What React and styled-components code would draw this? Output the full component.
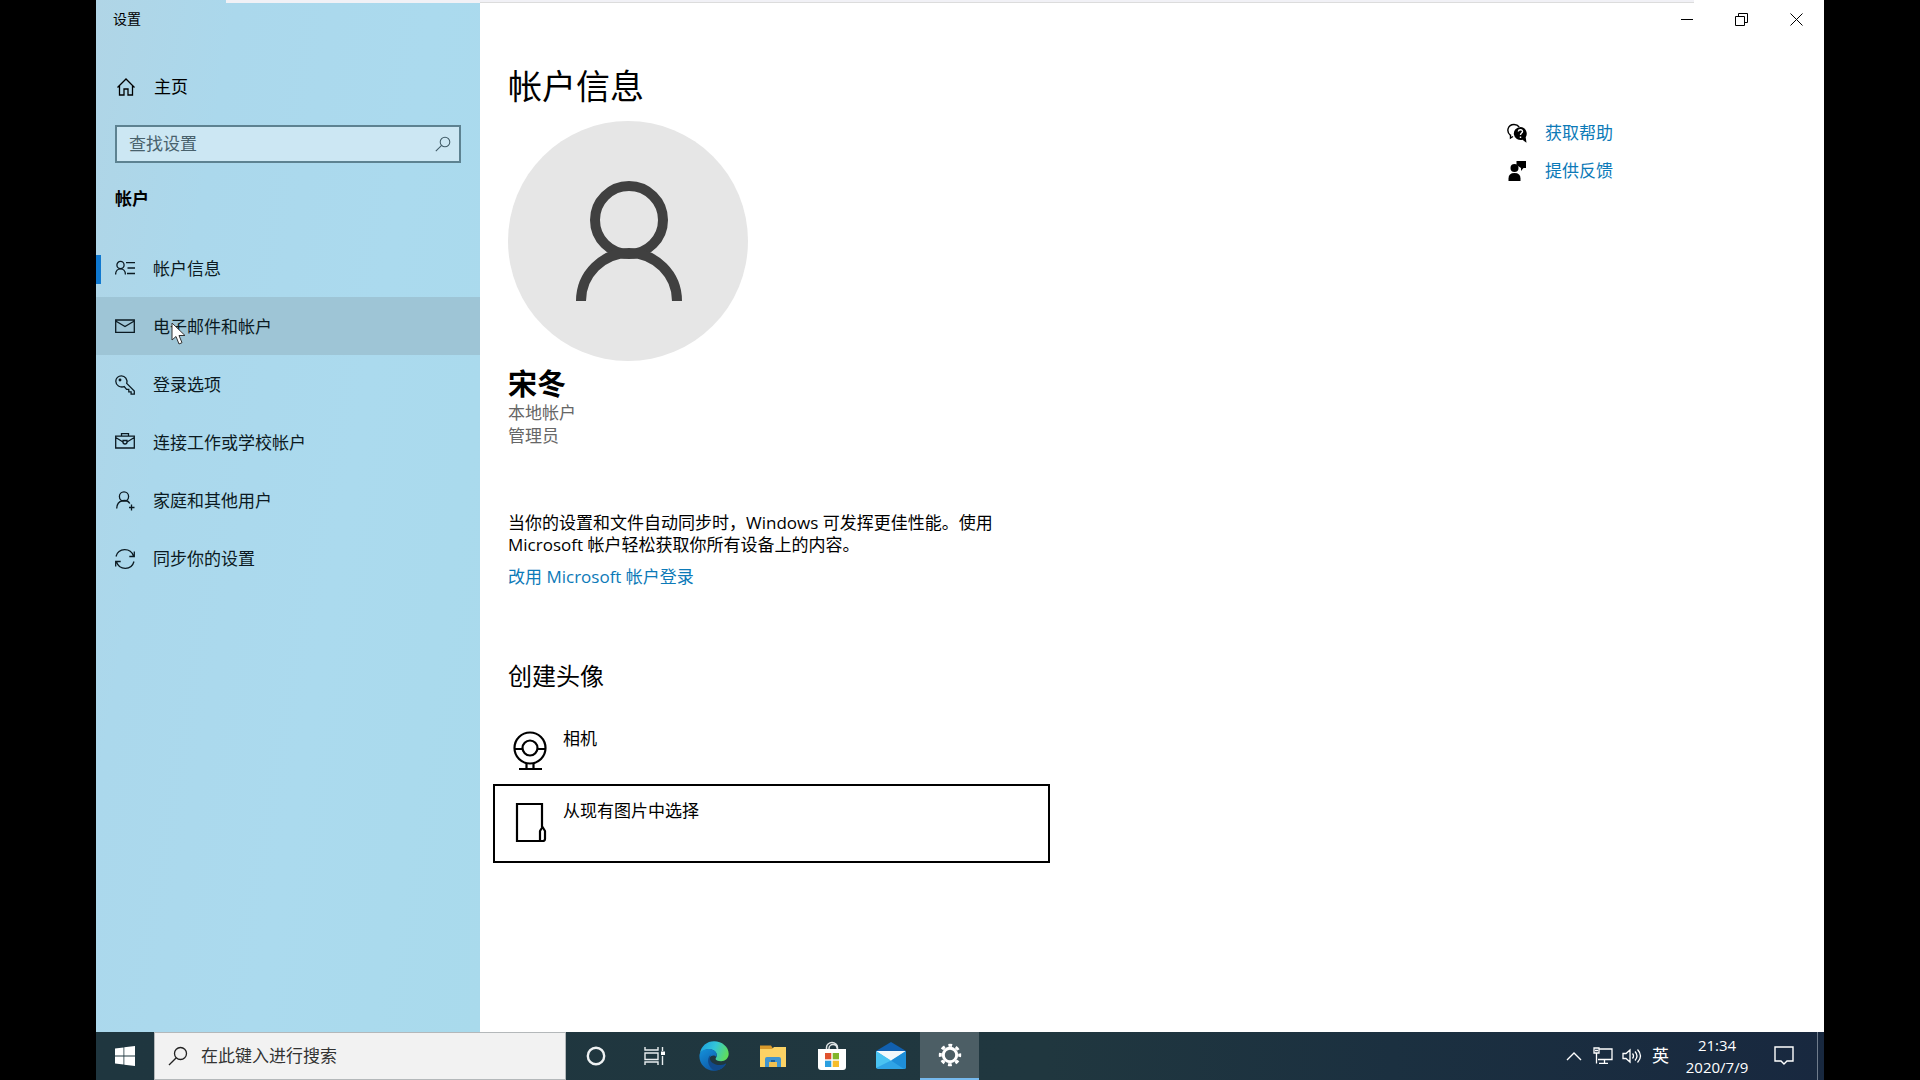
import React from "react";
import styled, { createGlobalStyle } from "styled-components";

const GlobalStyle = createGlobalStyle`
  * {
    box-sizing: border-box;
  }
  body {
    margin: 0;
    background: #000;
    color: #000;
    font-family: "Open Sans", "Noto Sans CJK SC", sans-serif;
    font-size: 17px;
    line-height: 22px;
  }
  button, input {
    font: inherit;
    color: inherit;
  }
  h1, h2, h3, p {
    margin: 0;
    font-weight: 400;
  }
  svg {
    display: block;
    flex: none;
  }
`;

const Desktop = styled.div`
  display: flex;
  flex-direction: column;
  min-height: 100vh;
  padding: 0 5%;
`;

const Window = styled.div`
  flex: 1;
  display: flex;
  background: #fff;
`;

const Sidebar = styled.aside`
  width: 384px;
  flex: none;
  background: linear-gradient(100deg, #b0d5e6 0%, #abd8ec 25%, #abdaee 60%, #a9daec 100%);
`;

const BackTab = styled.div`
  height: 3px;
  margin-left: ${(props) => props.$left || "0"};
  margin-right: ${(props) => props.$right || "0"};
  background: #f1f1f6;
  border-bottom: ${(props) => (props.$line ? "1px solid #dcdcdc" : "0")};
`;

const AppTitle = styled.div`
  padding: 5px 17px 6px;
  font-size: 14px;
`;

const HomeLink = styled.a`
  display: flex;
  align-items: center;
  gap: 18px;
  margin-top: 29px;
  height: 44px;
  padding-left: 20px;
  color: #000;
  text-decoration: none;
`;

const SearchBox = styled.label`
  display: flex;
  align-items: center;
  margin: 16px 19px 0;
  height: 38px;
  padding: 0 8px 0 12px;
  border: 2px solid #5d8291;
  background: #cce7f3;
  color: #3f5a66;

  input {
    flex: 1;
    min-width: 0;
    padding: 0;
    border: 0;
    outline: 0;
    background: transparent;
  }
  input::placeholder {
    color: #48616c;
    opacity: 1;
  }
`;

const Category = styled.h2`
  padding: 25px 19px 0;
  font-size: 17px;
  line-height: 22px;
  font-weight: 700;
`;

const Nav = styled.nav`
  margin-top: 29px;
`;

const NavItem = styled.a`
  display: flex;
  align-items: center;
  gap: 18px;
  height: 58px;
  padding-top: 2px;
  color: #0b1a22;
  text-decoration: none;
  background: ${(props) => (props.$hover ? "#9ec5d6" : "transparent")};

  &::before {
    content: "";
    width: 5px;
    height: 29px;
    margin-right: -4px;
    background: ${(props) => (props.$active ? "#0f78d0" : "transparent")};
  }
`;

const Pointer = styled.svg`
  position: absolute;
  left: 171px;
  top: 322px;
`;

const Main = styled.main`
  flex: 1;
  min-width: 0;
`;

const Controls = styled.div`
  display: flex;
  justify-content: flex-end;
  height: 32px;
`;

const ControlButton = styled.button`
  display: flex;
  align-items: center;
  justify-content: center;
  width: 55px;
  padding: 0;
  border: 0;
  background: transparent;
`;

const Content = styled.div`
  display: flex;
  justify-content: space-between;
  padding: 27px 211px 0 28px;
`;

const Title = styled.h1`
  font-size: 34px;
  line-height: 48px;
  font-weight: 400;
`;

const Avatar = styled.div`
  width: 240px;
  height: 240px;
  margin-top: 11px;
  border-radius: 50%;
  background: #e6e6e6;
`;

const UserName = styled.h2`
  margin-top: 6px;
  font-size: 29px;
  line-height: 34px;
  font-weight: 700;
`;

const Muted = styled.p`
  color: #666;
  line-height: 23px;
`;

const Description = styled.p`
  width: 500px;
  margin-top: 65px;
`;

const Link = styled.a`
  color: #0c7ab8;
  text-decoration: none;
`;

const SignIn = styled.p`
  margin-top: 10px;
`;

const SectionTitle = styled.h3`
  margin-top: 72px;
  font-size: 24px;
  line-height: 32px;
`;

const Picker = styled.div`
  margin: 20px 0 0 -15px;
`;

const PickerButton = styled.button`
  display: flex;
  align-items: flex-start;
  gap: 16px;
  width: 557px;
  height: ${(props) => (props.$focused ? "79px" : "72px")};
  padding: ${(props) => (props.$focused ? "14px 18px" : "16px 20px")};
  border: ${(props) => (props.$focused ? "2px solid #000" : "0")};
  background: transparent;
  text-align: left;

  svg {
    margin-top: 3px;
  }
`;

const Help = styled.div`
  display: flex;
  flex-direction: column;
  gap: 16px;
  padding-top: 60px;
`;

const HelpRow = styled(Link)`
  display: flex;
  align-items: center;
  gap: 17px;
`;

const Taskbar = styled.footer`
  display: flex;
  height: 48px;
  background: linear-gradient(90deg, #1f363f 0%, #20373f 55%, #1b3040 75%, #18283f 100%);
  color: #fff;
`;

const TaskButton = styled.button`
  display: flex;
  align-items: center;
  justify-content: center;
  width: ${(props) => props.$width || "59px"};
  padding: 0;
  border: 0;
  border-bottom: ${(props) => (props.$active ? "2px solid #76b9ed" : "0")};
  background: ${(props) => (props.$active ? "#4c5e65" : "transparent")};
`;

const TaskSearch = styled.label`
  display: flex;
  align-items: center;
  gap: 13px;
  width: 412px;
  padding-left: 13px;
  border: 1px solid #b4b8ba;
  background: #f2f2f2;
  color: #222;

  input {
    flex: 1;
    min-width: 0;
    padding: 0;
    border: 0;
    outline: 0;
    background: transparent;
  }
  input::placeholder {
    color: #333;
    opacity: 1;
  }
`;

const Tray = styled.div`
  display: flex;
  align-items: center;
  margin-left: auto;
`;

const TrayButton = styled.button`
  display: flex;
  align-items: center;
  justify-content: center;
  width: 29px;
  height: 48px;
  padding: 0;
  border: 0;
  background: transparent;
`;

const Clock = styled.time`
  width: 84px;
  text-align: center;
  font-size: 15px;
`;

const ActionButton = styled(TrayButton)`
  width: 50px;
  margin-right: 8px;
`;

const ShowDesktop = styled.button`
  width: 7px;
  height: 48px;
  padding: 0;
  border: 0;
  border-left: 1px solid #6f7c8c;
  background: transparent;
`;

const Line = ({ size = 20, width = 1.3, children }) => (
  <svg width={size} height={size} viewBox="0 0 20 20" fill="none" stroke="currentColor" strokeWidth={width}>
    {children}
  </svg>
);

const HomeIcon = () => (
  <Line>
    <path d="M1.5 10.5 10 2l8.500 8.500M3.500 9v9H8v-6h4v6h4.500V9" />
  </Line>
);

const SearchIcon = ({ size }) => (
  <Line size={size}>
    <circle cx="12.500" cy="7.500" r="6" />
    <path d="M8.300 11.700 1 19" />
  </Line>
);

const InfoIcon = () => (
  <Line>
    <circle cx="5.500" cy="6" r="3.600" />
    <path d="M.6 15.500c0-7.500 9.800-7.500 9.800 0M11 3.700h9M12.500 9h7.500M12 14.500h8" />
  </Line>
);

const MailIcon = () => (
  <Line>
    <path d="M.7 3h18.600v12.300H.7zM.7 4 10 9.500 19.300 4" />
  </Line>
);

const KeyIcon = () => (
  <Line>
    <path d="M9.200 11.600C5 13 .8 10.200.8 6.300.8 3.200 3.300.8 6.400.8c3.700 0 6.400 3.700 5.300 7.600l7.600 7.600v3.200h-3.200v-2.400h-2.300v-2.400h-2.200z" />
    <circle cx="5" cy="5" r=".8" fill="currentColor" />
  </Line>
);

const BriefcaseIcon = () => (
  <Line>
    <path d="M.7 3.200h18.600V15H.7zM6.500 3V.7h7V3M.7 4.500 8 9M12 9l7.300-4.500" />
    <path d="M8 7.500h4V9a2 2 0 0 1-4 0z" />
  </Line>
);

const FamilyIcon = () => (
  <Line>
    <circle cx="9" cy="5.500" r="4.600" />
    <path d="M1.700 17.500C2 8 12.500 8 14.800 12.500M16.500 13.500v6M14 16.500h5.500" />
  </Line>
);

const SyncIcon = () => (
  <Line>
    <path d="M1 7.500C3.500-1.500 15.500-1.500 18.500 7M19.300 2.500v5h-5M19 12.500C16.500 21.500 4.500 21.500 1.500 13M.7 17.500v-5h5" />
  </Line>
);

const WebcamIcon = () => (
  <svg width="34" height="40" viewBox="0 0 34 40" fill="none" stroke="#000" strokeWidth="2.200">
    <circle cx="17" cy="17" r="15.500" />
    <circle cx="17" cy="17" r="7.500" />
    <path d="M1 18h8.500M24.500 18H33M13.500 32v5M20.500 32v5M6 38h23" />
  </svg>
);

const PictureIcon = () => (
  <svg width="34" height="40" viewBox="0 0 34 40" fill="none" stroke="#000" strokeWidth="2.200">
    <path d="M27 38H4V1h25v23M27 38V28l2.500-4 2.500 4v8q0 2-2.500 2H27" />
  </svg>
);

const HelpIcon = () => (
  <svg width="21" height="21" viewBox="0 0 21 21">
    <path d="M3.500 11.500V15L6 13.500M3.500 12.500C-1 9 .5 1.500 7 1.500c2.500 0 4 .8 5.200 2.500" fill="none" stroke="#000" strokeWidth="1.400" />
    <path d="M13.500 4a7 6.500 0 1 0 2 12.800l4 3-.8-5.500A6.700 6.700 0 0 0 13.500 4z" />
    <path d="M11.300 8.500c.3-2.500 4.500-2.200 4.200.2-.2 1.400-2 1.500-2 3.200M13.500 13.500v1.500" fill="none" stroke="#fff" strokeWidth="1.400" />
  </svg>
);

const FeedbackIcon = () => (
  <svg width="21" height="21" viewBox="0 0 21 21">
    <path d="M9.500 0H19v7h-2.500L14 10V7l-4.500-3z" />
    <circle cx="7.500" cy="7" r="4" />
    <path d="M1.500 20v-2.500Q1.500 12 7.500 12t6 5.500V20z" />
  </svg>
);

const WindowsIcon = () => (
  <svg width="20" height="20" viewBox="0 0 20 20" fill="#fff">
    <path d="M0 2.500 8.500 1.400v8.200H0zM9.300 1.300 20 0v9.600H9.300zM0 10.400h8.500v8.200L0 17.500zM9.300 10.400H20V20L9.300 18.700z" />
  </svg>
);

const CortanaIcon = () => (
  <svg width="20" height="20" viewBox="0 0 20 20" fill="none" stroke="#eef2f3" strokeWidth="2.400">
    <circle cx="10" cy="10" r="8.200" />
  </svg>
);

const TaskViewIcon = () => (
  <svg width="22" height="20" viewBox="0 0 22 20" fill="none" stroke="#e8edef" strokeWidth="1.400">
    <path d="M1 1v3h13V1M1 7h13v6.500H1zM1 19v-3h13v3M18.500 1v4M18.500 10v9" />
    <path d="M17 5.500h4v3.500h-4z" fill="#fff" stroke="none" />
  </svg>
);

const EdgeIcon = () => (
  <svg width="30" height="30" viewBox="0 0 30 30">
    <defs>
      <linearGradient id="edgeTop" x1="0" x2="1" y1="0.200" y2="0.500">
        <stop offset="0" stopColor="#1c9fe0" />
        <stop offset="0.500" stopColor="#33c5d8" />
        <stop offset="1" stopColor="#5fdc5c" />
      </linearGradient>
      <linearGradient id="edgeLow" x1="0" x2="0.800" y1="0" y2="1">
        <stop offset="0" stopColor="#1492dc" />
        <stop offset="1" stopColor="#0d4e9c" />
      </linearGradient>
    </defs>
    <path d="M.8 13C2 5 8 .3 15 .3c8 0 14.700 5.500 14.700 12.500 0 4.500-3.500 7.400-7.600 7.400-3.400 0-5.500-1.200-5.500-2.300 0-.8 1.200-1.500 1.200-3.600 0-3.300-3.300-6-7.600-6C5 8.300 2 10.800.8 13z" fill="url(#edgeTop)" />
    <path d="M.4 15C.4 10.800 4.500 8 9.500 8c4.800 0 8.300 2.600 8.300 6 0 1-.2 1.700-.5 2.300-1-2.600-5.300-2.500-6.600.5-1.500 4 2 8.500 7.500 8.700 3.300.1 6.300-1.300 8.600-2.500C24.500 27.200 20 29.700 15 29.700 6.500 29.700.4 23 .4 15z" fill="url(#edgeLow)" />
    <path d="M12 13.500C6 18.500 10.500 28.500 16.500 29.700 21 29 25 26.500 27 23.300c.3-.6-.2-1-.8-.6C19 26.500 11 22 10.700 17c0-1.300.5-2.500 1.300-3.500z" fill="#114a8b" />
  </svg>
);

const ExplorerIcon = () => (
  <svg width="28" height="24" viewBox="0 0 28 24">
    <path d="M1 1.500h11l2 3h13v3H1z" fill="#d9992b" />
    <path d="M1 5h12l2-2h12v20H1z" fill="#fbd265" />
    <path d="M6 23v-8q0-2 2-2h12q2 0 2 2v8h-4v-5h-8v5z" fill="#3f94cf" />
    <path d="M10 18h8v5h-8z" fill="#f0c04f" />
    <path d="M12 16h4v2h-4z" fill="#1f5f99" />
  </svg>
);

const StoreIcon = () => (
  <svg width="30" height="30" viewBox="0 0 30 30">
    <path d="M9.500 9V6.500a5.500 5 0 0 1 11 0V9M12 9V7.500a4 4 0 0 1 8 0" fill="none" stroke="#dfe4e6" strokeWidth="1.500" />
    <path d="M1 8h28v18q0 3-3 3H4q-3 0-3-3z" fill="#fff" />
    <path d="M8 12h6.300v6.300H8z" fill="#e0532f" />
    <path d="M15.700 12H22v6.300h-6.300z" fill="#82b52b" />
    <path d="M8 19.700h6.300V26H8z" fill="#2b9fe0" />
    <path d="M15.700 19.700H22V26h-6.300z" fill="#f6bd2c" />
  </svg>
);

const MailAppIcon = () => (
  <svg width="30" height="28" viewBox="0 0 30 28">
    <path d="M0 9 15 0l15 9v4H0z" fill="#1160b0" />
    <path d="M1 9h28v10H1z" fill="#f4f8fb" />
    <path d="M0 9l15 10L30 9v16q0 2-2 2H2q-2 0-2-2z" fill="#2fa4e6" />
    <path d="M30 9v16q0 2-2 2L15 18.500z" fill="#1e8ed8" />
    <path d="M0 26 15 18.500 9 14.800 0 9z" fill="#4ac3f2" />
  </svg>
);

const GearIcon = () => (
  <svg width="24" height="24" viewBox="0 0 24 24" fill="none" stroke="#fff">
    <circle cx="12" cy="12" r="6.700" strokeWidth="3" />
    <circle cx="12" cy="12" r="9.700" strokeWidth="3" strokeDasharray="3.800 3.818" strokeDashoffset="1.900" />
  </svg>
);

const navItems = [
  { label: "帐户信息", Icon: InfoIcon, active: true },
  { label: "电子邮件和帐户", Icon: MailIcon, hover: true },
  { label: "登录选项", Icon: KeyIcon },
  { label: "连接工作或学校帐户", Icon: BriefcaseIcon },
  { label: "家庭和其他用户", Icon: FamilyIcon },
  { label: "同步你的设置", Icon: SyncIcon },
];

const apps = [
  { name: "Cortana", Icon: CortanaIcon },
  { name: "任务视图", Icon: TaskViewIcon },
  { name: "Microsoft Edge", Icon: EdgeIcon },
  { name: "文件资源管理器", Icon: ExplorerIcon },
  { name: "Microsoft Store", Icon: StoreIcon },
  { name: "邮件", Icon: MailAppIcon },
  { name: "设置", Icon: GearIcon, active: true },
];

const SettingsSidebar = () => (
  <Sidebar>
    <BackTab $left="130px" />
    <AppTitle>设置</AppTitle>
    <HomeLink href="#">
      <HomeIcon />
      主页
    </HomeLink>
    <SearchBox>
      <input type="text" placeholder="查找设置" aria-label="查找设置" />
      <SearchIcon size={16} />
    </SearchBox>
    <Category>帐户</Category>
    <Nav>
      {navItems.map(({ label, Icon, active, hover }) => (
        <NavItem href="#" key={label} $active={active} $hover={hover}>
          <Icon />
          {label}
        </NavItem>
      ))}
    </Nav>
  </Sidebar>
);

const AccountPage = () => (
  <Main>
    <BackTab $right="130px" $line />
    <Controls>
      <ControlButton aria-label="最小化">
        <svg width="12" height="12" viewBox="0 0 12 12" stroke="#000"><path d="M0 6.500h12" /></svg>
      </ControlButton>
      <ControlButton aria-label="还原">
        <svg width="13" height="13" viewBox="0 0 13 13" fill="none" stroke="#000">
          <path d="M.5 3.500h9v9h-9zM3.500 3.500v-3h9v9h-3" />
        </svg>
      </ControlButton>
      <ControlButton aria-label="关闭">
        <svg width="13" height="13" viewBox="0 0 13 13" stroke="#000"><path d="M.5.5l12 12M12.500.5l-12 12" /></svg>
      </ControlButton>
    </Controls>
    <Content>
      <div>
        <Title>帐户信息</Title>
        <Avatar>
          <svg width="240" height="240" viewBox="0 0 240 240" fill="none" stroke="#404040" strokeWidth="10">
            <circle cx="121" cy="99" r="34" />
            <path d="M73 180a48 48 0 0 1 96 0" />
          </svg>
        </Avatar>
        <UserName>宋冬</UserName>
        <Muted>本地帐户</Muted>
        <Muted>管理员</Muted>
        <Description>
          当你的设置和文件自动同步时，Windows 可发挥更佳性能。使用 Microsoft 帐户轻松获取你所有设备上的内容。
        </Description>
        <SignIn>
          <Link href="#">改用 Microsoft 帐户登录</Link>
        </SignIn>
        <SectionTitle>创建头像</SectionTitle>
        <Picker>
          <PickerButton>
            <WebcamIcon />
            相机
          </PickerButton>
          <PickerButton $focused>
            <PictureIcon />
            从现有图片中选择
          </PickerButton>
        </Picker>
      </div>
      <Help>
        <HelpRow href="#">
          <HelpIcon />
          获取帮助
        </HelpRow>
        <HelpRow href="#">
          <FeedbackIcon />
          提供反馈
        </HelpRow>
      </Help>
    </Content>
  </Main>
);

const SystemTray = () => (
  <Tray>
    <TrayButton aria-label="显示隐藏的图标">
      <svg width="16" height="10" viewBox="0 0 16 10" fill="none" stroke="#fff" strokeWidth="1.400"><path d="M1 9l7-7 7 7" /></svg>
    </TrayButton>
    <TrayButton aria-label="网络">
      <svg width="20" height="18" viewBox="0 0 20 18" fill="none" stroke="#fff" strokeWidth="1.300">
        <path d="M6 2h13v10.500H5M11.500 12.500V16M6 16.300h9M1 1h5v5H1zM3.500 6v10.500M2 3.500h3" />
      </svg>
    </TrayButton>
    <TrayButton aria-label="音量">
      <svg width="20" height="18" viewBox="0 0 20 18" fill="none" stroke="#fff" strokeWidth="1.300">
        <path d="M1 6.500h3L8 3v12l-4-3.500H1zM10.500 6.500q2 2.500 0 5M13 4.500q4 4.500 0 9M15.500 2.500q6 6.500 0 13" />
      </svg>
    </TrayButton>
    <TrayButton>英</TrayButton>
    <Clock>
      21:34
      <br />
      2020/7/9
    </Clock>
    <ActionButton aria-label="通知">
      <svg width="20" height="20" viewBox="0 0 20 20" fill="none" stroke="#fff" strokeWidth="1.400">
        <path d="M1 1h18v14h-6l-3 3-3-3H1z" />
      </svg>
    </ActionButton>
    <ShowDesktop aria-label="显示桌面" />
  </Tray>
);

const App = () => {
  return (
    <Desktop>
      <GlobalStyle />
      <Window>
        <SettingsSidebar />
        <AccountPage />
      </Window>
      <Taskbar>
        <TaskButton $width="58px" aria-label="开始">
          <WindowsIcon />
        </TaskButton>
        <TaskSearch>
          <SearchIcon size={20} />
          <input type="text" placeholder="在此键入进行搜索" aria-label="在此键入进行搜索" />
        </TaskSearch>
        {apps.map(({ name, Icon, active }) => (
          <TaskButton key={name} aria-label={name} $active={active}>
            <Icon />
          </TaskButton>
        ))}
        <SystemTray />
      </Taskbar>
      <Pointer width="16" height="24" viewBox="0 0 16 24">
        <path d="M1 1v17l4-3.500 3 7.500 3-1.300-3-7.200h6z" fill="#fff" stroke="#333" />
      </Pointer>
    </Desktop>
  );
};

export default App;
